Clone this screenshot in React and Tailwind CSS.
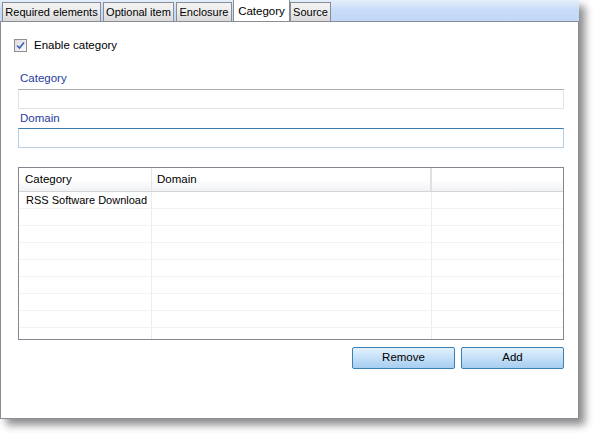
import React from "react";

const tabs = [
  { label: "Required elements", w: "w-[99px]", ml: "ml-0" },
  { label: "Optional item", w: "w-[71px]", ml: "ml-[2px]" },
  { label: "Enclosure", w: "w-[56px]", ml: "ml-[2px]" },
  { label: "Category", w: "w-[57px]", ml: "ml-[1px]", active: true },
  { label: "Source", w: "w-[41px]", ml: "ml-0" },
];

const Tab = ({ label, w, ml, active }) => {
  if (active) {
    return (
      <div
        className={`${w} ${ml} h-[22px] z-10 flex items-start justify-center pt-[3px] bg-white border border-b-0 border-[#898c95] text-[11.5px] text-black whitespace-nowrap`}
      >
        {label}
      </div>
    );
  }
  return (
    <div
      className={`${w} ${ml} h-[19px] flex items-center justify-center pt-[1px] bg-gradient-to-b from-[#f3f3f3] via-[#ebebeb] to-[#d9d9d9] border border-b-0 border-[#898c95] text-[11px] text-black whitespace-nowrap`}
    >
      {label}
    </div>
  );
};

const Checkbox = () => (
  <div className="w-[13px] h-[13px] border border-[#8e8f8f] bg-gradient-to-br from-[#dcdcdc] to-[#fafafa] flex items-center justify-center">
    <svg width="9" height="9" viewBox="0 0 9 9">
      <path d="M1 4.5 L3.5 7 L8 1.5" fill="none" stroke="#3b5fb8" strokeWidth="1.6" />
    </svg>
  </div>
);

const rows = ["RSS Software Download", "", "", "", "", "", "", ""];

const App = () => {
  return (
    <div
      className="w-[597px] h-[433px] bg-white overflow-hidden"
      style={{ fontFamily: '"Liberation Sans", Arial, sans-serif' }}
    >
      <div className="w-[579px] h-[419px] flex flex-col shadow-[6px_6px_8px_rgba(0,0,0,0.45)]">
        {/* Tab strip */}
        <div className="h-[21px] flex items-end pl-[2px] bg-gradient-to-b from-[#e4eefb] via-[#c6dcf8] to-[#c2d9f7] relative">
          {tabs.map((t) => (
            <Tab key={t.label} {...t} />
          ))}
        </div>

        {/* Panel */}
        <div className="flex-1 bg-white border border-[#898c95] pl-[13px] pr-[14px] pt-[17px] flex flex-col">
          <div className="flex items-center gap-[7px] h-[13px]">
            <Checkbox />
            <span className="text-[11.5px] text-black leading-none">Enable category</span>
          </div>

          <div className="pl-[4px] mt-[19px]">
            <div className="text-[11.5px] text-[#1f3c9e] leading-[14px] pl-[2px]">Category</div>
            <div className="mt-[4px] h-[20px] border border-[#dfe2e7] border-t-[#abadb3] bg-white" />

            <div className="text-[11.5px] text-[#1f3c9e] leading-[14px] pl-[2px] mt-[2px]">Domain</div>
            <div className="mt-[3px] h-[20px] border border-[#b7d0e8] border-t-[#3d7bad] bg-white" />

            {/* List view */}
            <div className="mt-[19px] h-[173px] border border-[#828790] bg-white flex flex-col overflow-hidden">
              <div className="h-[24px] flex bg-gradient-to-b from-white via-white to-[#f1f2f4] border-b border-[#d5d5d5] text-[11.5px] text-black">
                <div className="w-[133px] pl-[6px] flex items-center border-r border-[#e5e5e5]">Category</div>
                <div className="w-[280px] pl-[5px] flex items-center border-r-2 border-[#e0e0e0]">Domain</div>
                <div className="flex-1" />
              </div>
              {rows.map((r, i) => (
                <div key={i} className="h-[17px] flex border-b border-[#f2f2f2] text-[11px] text-black">
                  <div className="w-[133px] pl-[7px] flex items-center border-r border-[#ececec] whitespace-nowrap">{r}</div>
                  <div className="w-[280px] border-r border-[#ececec]" />
                  <div className="flex-1" />
                </div>
              ))}
              <div className="flex-1 flex">
                <div className="w-[133px] border-r border-[#ececec]" />
                <div className="w-[280px] border-r border-[#ececec]" />
              </div>
            </div>

            <div className="mt-[7px] flex justify-end gap-[6px]">
              {["Remove", "Add"].map((b) => (
                <button
                  key={b}
                  className="w-[103px] h-[22px] border border-[#3c7fb1] rounded-[2px] bg-gradient-to-b from-[#e3f1fc] via-[#c4e0f8] to-[#a6cdf0] text-[11.5px] text-black flex items-center justify-center"
                >
                  {b}
                </button>
              ))}
            </div>
          </div>
        </div>
      </div>
    </div>
  );
};

export default App;
